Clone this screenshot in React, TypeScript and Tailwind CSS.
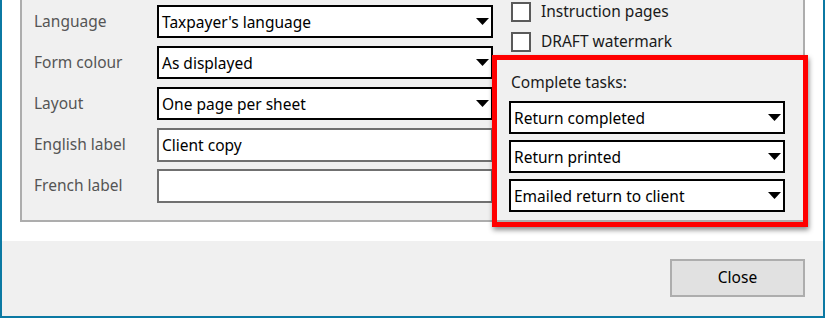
import React from 'react';

const font = { fontFamily: '"Noto Sans", "Open Sans", sans-serif' };

function Arrow() {
  return (
    <svg width="13" height="7" viewBox="0 0 13 7" className="shrink-0">
      <path d="M0 0 H13 L6.5 7 Z" fill="#000" />
    </svg>
  );
}

function Select({ value, w }: { value: string; w: string }) {
  return (
    <div className={`${w} h-[33px] border-2 border-black bg-white flex items-center pl-[3px] pr-[2px]`}>
      <span className="flex-1 whitespace-nowrap text-[15.5px] leading-[22px] text-black">{value}</span>
      <Arrow />
    </div>
  );
}

function TextBox({ value }: { value: string }) {
  return (
    <div className="w-[336px] h-[34px] border-2 border-[#707070] bg-white flex items-center pl-[3px]">
      <span className="text-[15.5px] leading-[22px] text-black">{value}</span>
    </div>
  );
}

function Row({ label, children }: { label: string; children: React.ReactNode }) {
  return (
    <div className="flex items-center h-[33px]">
      <span className="w-[123px] text-[15.5px] text-[#555555]">{label}</span>
      {children}
    </div>
  );
}

function Check({ label }: { label: string }) {
  return (
    <div className="flex items-center h-[20px] gap-[10px]">
      <div className="w-[20px] h-[20px] border-2 border-[#5a5a5a] bg-white" />
      <span className="text-[15.5px] text-[#1a1a1a]">{label}</span>
    </div>
  );
}

export default function App() {
  return (
    <div
      style={font}
      className="relative w-[825px] h-[318px] overflow-hidden bg-white border-x-2 border-b-2 border-[#0b79a3] flex flex-col"
    >
      {/* options group */}
      <div className="h-[241px] px-[18px]">
        <div className="h-[222px] border-2 border-t-0 border-[#adadad] bg-[#f0f0f0] flex pl-[12px]">
          <div className="flex flex-col gap-[8px] pt-[5px]">
            <Row label="Language">
              <Select value="Taxpayer's language" w="w-[336px]" />
            </Row>
            <Row label="Form colour">
              <Select value="As displayed" w="w-[336px]" />
            </Row>
            <Row label="Layout">
              <Select value="One page per sheet" w="w-[336px]" />
            </Row>
            <Row label="English label">
              <TextBox value="Client copy" />
            </Row>
            <Row label="French label">
              <TextBox value="" />
            </Row>
          </div>

          <div className="flex flex-col pl-[18px] pt-[2px]">
            <div className="flex flex-col gap-[10px]">
              <Check label="Instruction pages" />
              <Check label="DRAFT watermark" />
            </div>
            <div className="mt-[21px] h-[20px] flex items-center text-[15.5px] text-[#1a1a1a]">
              Complete tasks:
            </div>
            <div className="mt-[8px] flex flex-col gap-[6px] -ml-[2px]">
              <Select value="Return completed" w="w-[276px]" />
              <Select value="Return printed" w="w-[276px]" />
              <Select value="Emailed return to client" w="w-[276px]" />
            </div>
          </div>
        </div>
      </div>

      {/* footer */}
      <div className="flex-1 bg-[#f0f0f0] flex justify-end items-start pt-[18px] pr-[18px]">
        <button className="w-[135px] h-[38px] border-2 border-[#adadad] bg-[#e1e1e1] text-[15.5px] text-black">
          Close
        </button>
      </div>

      {/* red highlight annotation */}
      <div className="pointer-events-none absolute left-[490px] top-[55px] w-[316px] h-[172px] border-[5px] border-[#ff0000] shadow-[1px_3px_5px_rgba(0,0,0,0.45)]" />
    </div>
  );
}
